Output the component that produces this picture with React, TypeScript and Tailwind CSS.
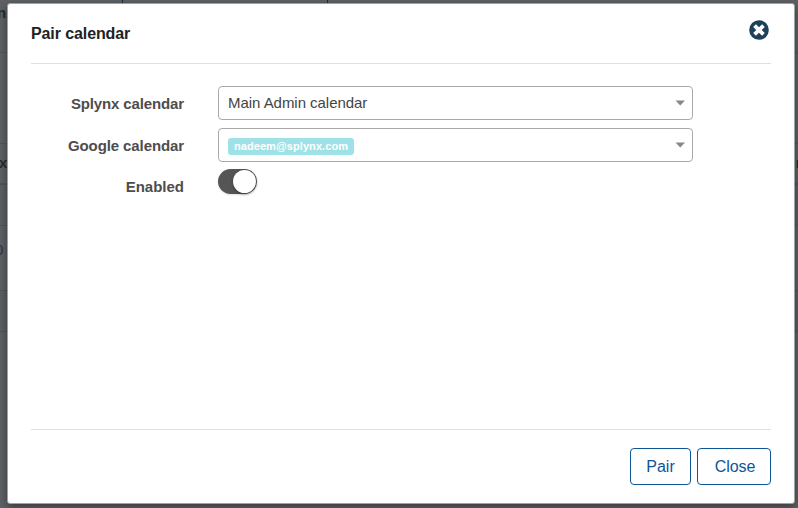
import React from 'react';

function SelectBox({ children }: { children: React.ReactNode }) {
  return (
    <div className="flex h-[34px] w-[475px] items-center justify-between rounded border border-[#aaa] bg-white pr-[7px] pl-[9px]">
      {children}
      <svg width="10" height="6" viewBox="0 0 10 6" className="block shrink-0">
        <path d="M0.5 0.5H10L5.25 5.5Z" fill="#888" />
      </svg>
    </div>
  );
}

function Label({ children }: { children: React.ReactNode }) {
  return <div className="w-[153px] text-right text-[15px] leading-[20px] font-bold text-[#4d4d4d]">{children}</div>;
}

function Backdrop() {
  return (
    <div className="flex h-[508px] w-[798px] flex-col bg-[#5d6064] text-[15px] leading-[20px] text-[#292b30]">
      <div className="flex h-[53px] border-b border-[#515358] font-bold">
        <div className="w-[123px] border-r border-[#12304a] pt-[3px]">
          <span className="-ml-[3px]">n</span>
        </div>
        <div className="w-[205px] border-r border-[#12304a]" />
      </div>
      <div className="h-[91px] border-b border-[#515358]" />
      <div className="flex h-[41px] justify-between border-b-2 border-[#515358] pt-[9px] font-bold">
        <span className="-ml-px">x</span>
        <span className="-mr-[7px] text-[#192d3c]">n</span>
      </div>
      <div className="h-[41px] border-b border-[#515358] bg-[#5b5e62]" />
      <div className="h-[65px] border-b border-[#515358] pt-[14px]">
        <span className="-ml-[5px] text-[#30343c]">0</span>
      </div>
      <div className="h-[41px] border-b border-[#515358] bg-[#5b5e62]" />
    </div>
  );
}

export default function App() {
  return (
    <div className="relative h-[508px] w-[798px] overflow-hidden" style={{ fontFamily: '"Liberation Sans", Arial, sans-serif' }}>
      <Backdrop />
      <div className="absolute top-[3px] left-[7px] flex h-[501px] w-[788px] flex-col rounded-[3px] border border-[#a0a1a3] bg-white px-[23px] shadow-[0_3px_9px_rgba(0,0,0,0.4)]">
        <header className="flex h-[60px] items-center justify-between border-b border-[#e0e0e0]">
          <h1 className="text-[16px] leading-[20px] font-bold tracking-[-0.1px] text-[#222]">Pair calendar</h1>
          <button aria-label="Close dialog" className="mr-[2px] mb-[7px]">
            <svg width="20" height="20" viewBox="0 0 20 20" className="block">
              <circle cx="10" cy="10" r="9.8" fill="#1c4159" />
              <path d="M6.9 6.9L13.1 13.1M13.1 6.9L6.9 13.1" stroke="#fff" strokeWidth="3.8" strokeLinecap="square" strokeLinejoin="round" />
            </svg>
          </button>
        </header>
        <main className="flex flex-1 flex-col gap-2 pt-[22px]">
          <div className="flex items-center gap-[34px]">
            <div className="pt-0.5 tracking-[-0.13px]">
              <Label>Splynx calendar</Label>
            </div>
            <SelectBox>
              <span className="text-[15px] leading-[20px] tracking-[-0.04px] text-[#444]">Main Admin calendar</span>
            </SelectBox>
          </div>
          <div className="flex items-center gap-[34px]">
            <div className="pt-0.5 tracking-[-0.1px]">
              <Label>Google calendar</Label>
            </div>
            <SelectBox>
              <span className="mt-[3px] h-[17px] w-[126px] rounded-[3px] bg-[#9ee1e7] text-center text-[11px] leading-[17px] font-bold tracking-[0.08px] text-white">
                nadeem@splynx.com
              </span>
            </SelectBox>
          </div>
          <div className="-mt-px flex items-start gap-[34px]">
            <div className="pt-2">
              <Label>Enabled</Label>
            </div>
            <div className="flex h-[25px] w-[39px] items-center justify-end rounded-full bg-[#555] pr-px shadow-[0_1px_2px_rgba(0,0,0,0.12)]">
              <div className="h-[23px] w-[23px] rounded-full bg-white shadow-[0_1px_3px_rgba(0,0,0,0.4)]" />
            </div>
          </div>
        </main>
        <footer className="flex h-[74px] items-start justify-end gap-1.5 border-t border-[#e0e0e0] pt-[18px]">
          <button className="h-[37px] w-[61px] rounded border border-[#0c5695] text-[16px] leading-[20px] text-[#0c5695]">Pair</button>
          <button className="h-[37px] w-[74px] rounded border border-[#0c5695] pl-0.5 text-[16px] leading-[20px] tracking-[-0.05px] text-[#0c5695]">Close</button>
        </footer>
      </div>
    </div>
  );
}
